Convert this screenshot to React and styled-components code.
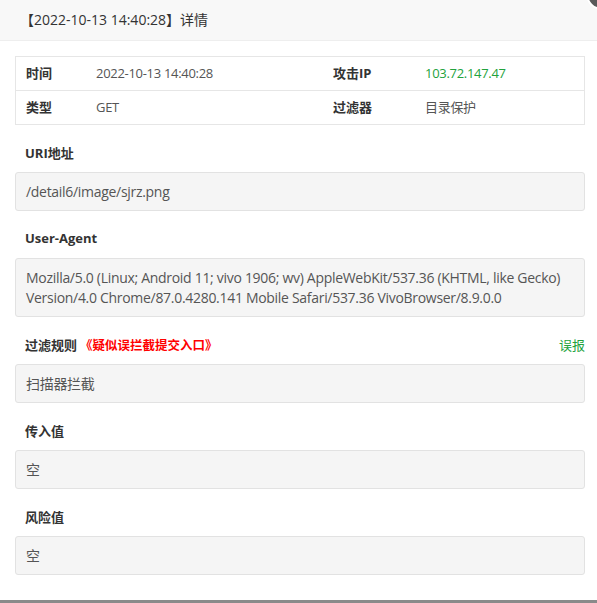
import React from "react";
import styled, { createGlobalStyle } from "styled-components";

const GlobalStyle = createGlobalStyle`
  html, body {
    margin: 0;
    padding: 0;
    background: #8a8a8a;
  }
  body {
    font-family: "Open Sans", "Noto Sans CJK SC", sans-serif;
    font-size: 14px;
    color: #555;
  }
`;

const Dialog = styled.div`
  position: relative;
  width: 597px;
  height: 600px;
  background: #fff;
  overflow: hidden;
`;

const TitleBar = styled.div`
  height: 40px;
  line-height: 40px;
  padding-left: 20px;
  background: #f8f8f8;
  border-bottom: 1px solid #eee;
  color: #333;
  font-size: 14px;
`;

const CloseBtn = styled.div`
  position: absolute;
  top: -22px;
  right: -21px;
  width: 28px;
  height: 28px;
  border-radius: 50%;
  background: #5a5a5a;
  border: 2px solid #fff;
  display: flex;
  align-items: center;
  justify-content: center;
`;

const Body = styled.div`
  padding: 15px 12px 0 15px;
`;

const InfoTable = styled.div`
  display: grid;
  grid-template-columns: 70px 237px 92px 1fr;
  border: 1px solid #e6e6e6;
`;

const Cell = styled.div`
  height: 33px;
  line-height: 33px;
  padding-left: 10px;
  font-size: 13px;
  font-weight: ${(p) => (p.$label ? 700 : 400)};
  letter-spacing: ${(p) => (p.$label ? "0" : "-0.3px")};
  color: ${(p) => (p.$green ? "#22a23c" : p.$label ? "#333" : "#555")};
  border-top: ${(p) => (p.$first ? "none" : "1px solid #e6e6e6")};
`;

const Section = styled.div`
  margin-top: 17px;
`;

const SectionHead = styled.div`
  display: flex;
  align-items: center;
  justify-content: space-between;
  height: 20px;
  padding-left: 10px;
  margin-bottom: 10px;
`;

const Label = styled.span`
  font-weight: 700;
  font-size: 13px;
  color: #333;
`;

const Alert = styled.span`
  color: #ff0000;
  font-weight: 700;
  font-size: 12.5px;
  margin-left: 3px;
`;

const Report = styled.span`
  color: #22a23c;
  font-size: 13px;
`;

const ValueBox = styled.div`
  background: #f5f5f5;
  border: 1px solid #e2e2e2;
  border-radius: 3px;
  padding: 9px 10px 8px;
  line-height: 20px;
  min-height: 20px;
  letter-spacing: -0.3px;
  color: #555;
`;

const App = () => (
  <>
    <GlobalStyle />
    <Dialog>
      <TitleBar>【2022-10-13 14:40:28】详情</TitleBar>
      <CloseBtn>
        <svg width="14" height="14" viewBox="0 0 14 14">
          <path d="M2 12 L12 2 M2 2 L12 12" stroke="#fff" strokeWidth="2" strokeLinecap="round" />
        </svg>
      </CloseBtn>
      <Body>
        <InfoTable>
          <Cell $label $first>时间</Cell>
          <Cell $first>2022-10-13 14:40:28</Cell>
          <Cell $label $first>攻击IP</Cell>
          <Cell $green $first>103.72.147.47</Cell>
          <Cell $label>类型</Cell>
          <Cell>GET</Cell>
          <Cell $label>过滤器</Cell>
          <Cell>目录保护</Cell>
        </InfoTable>

        <Section>
          <SectionHead><Label>URI地址</Label></SectionHead>
          <ValueBox>/detail6/image/sjrz.png</ValueBox>
        </Section>

        <Section>
          <SectionHead><Label>User-Agent</Label></SectionHead>
          <ValueBox>
            Mozilla/5.0 (Linux; Android 11; vivo 1906; wv) AppleWebKit/537.36 (KHTML, like Gecko) Version/4.0 Chrome/87.0.4280.141 Mobile Safari/537.36 VivoBrowser/8.9.0.0
          </ValueBox>
        </Section>

        <Section>
          <SectionHead>
            <span>
              <Label>过滤规则</Label>
              <Alert>《疑似误拦截提交入口》</Alert>
            </span>
            <Report>误报</Report>
          </SectionHead>
          <ValueBox>扫描器拦截</ValueBox>
        </Section>

        <Section>
          <SectionHead><Label>传入值</Label></SectionHead>
          <ValueBox>空</ValueBox>
        </Section>

        <Section>
          <SectionHead><Label>风险值</Label></SectionHead>
          <ValueBox>空</ValueBox>
        </Section>
      </Body>
    </Dialog>
  </>
);

export default App;
